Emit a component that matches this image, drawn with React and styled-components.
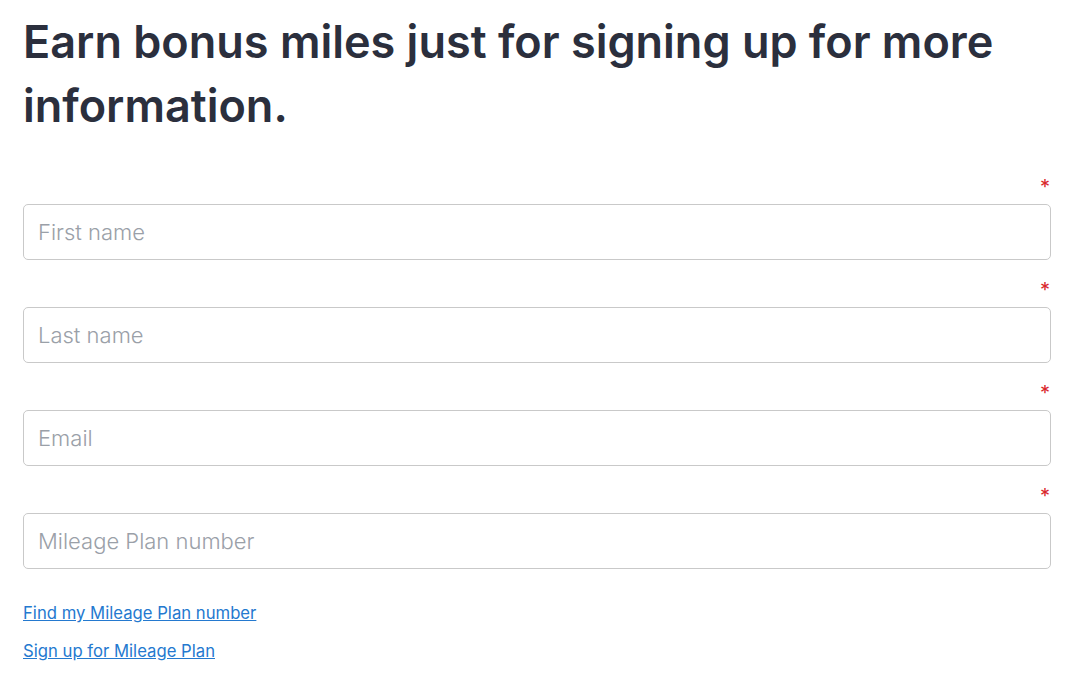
import styled, { createGlobalStyle } from "styled-components";

const Fields = [
  { id: "first", placeholder: "First name" },
  { id: "last", placeholder: "Last name" },
  { id: "email", placeholder: "Email" },
  { id: "mileage", placeholder: "Mileage Plan number" },
];

const Links = ["Find my Mileage Plan number", "Sign up for Mileage Plan"];

export default function App() {
  return (
    <>
      <GlobalStyle />
      <Page>
        <Heading>Earn bonus miles just for signing up for more information.</Heading>
        <Form>
          {Fields.map((field) => (
            <Field key={field.id}>
              <Required>*</Required>
              <Input type="text" placeholder={field.placeholder} />
            </Field>
          ))}
        </Form>
        <LinkList>
          {Links.map((label) => (
            <TextLink href="#" key={label}>
              {label}
            </TextLink>
          ))}
        </LinkList>
      </Page>
    </>
  );
}

const GlobalStyle = createGlobalStyle`
  body {
    margin: 0;
    background: #ffffff;
    font-family: Inter, "Noto Sans", sans-serif;
  }
`;

const Page = styled.div`
  padding: 10px 29px 0 23px;
`;

const Heading = styled.h1`
  margin: 0;
  font-size: 45px;
  line-height: 64px;
  font-weight: 600;
  color: #2b2f3d;
`;

const Form = styled.div`
  display: flex;
  flex-direction: column;
  gap: 23px;
  margin-top: 42px;
`;

const Field = styled.div`
  display: flex;
  flex-direction: column;
  align-items: flex-end;
  gap: 4px;
`;

const Required = styled.span`
  color: #d9262c;
  font-size: 20px;
  line-height: 20px;
  height: 20px;
  margin-top: -3px;
  margin-bottom: 3px;
  padding-right: 1px;
`;

const Input = styled.input`
  box-sizing: border-box;
  width: 100%;
  height: 56px;
  padding: 0 14px;
  border: 1.5px solid #c9c9c9;
  border-radius: 5px;
  font-family: Inter, "Noto Sans", sans-serif;
  font-size: 22px;
  font-weight: 300;
  color: #2b2f3d;
  outline: none;

  &::placeholder {
    color: #9aa0a8;
  }
`;

const LinkList = styled.div`
  display: flex;
  flex-direction: column;
  align-items: flex-start;
  gap: 17px;
  margin-top: 34px;
`;

const TextLink = styled.a`
  font-size: 16.7px;
  line-height: 21px;
  color: #2479cf;
  text-decoration: underline;
`;
